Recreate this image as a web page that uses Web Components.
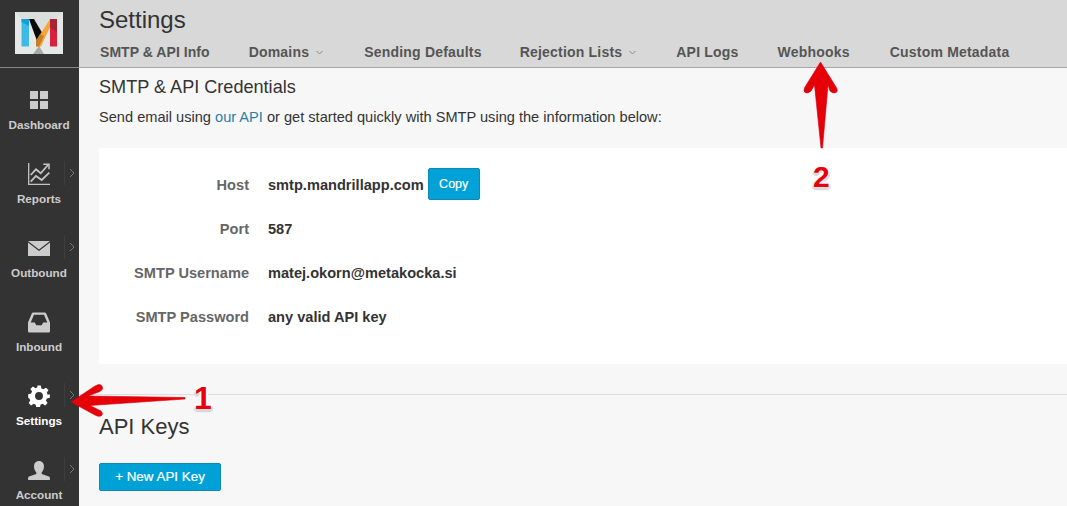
<!DOCTYPE html>
<html lang="en"><head><meta charset="utf-8"><title>Settings</title>
<style>
html,body{margin:0;height:100%;overflow:hidden}
body{font-family:"Liberation Sans",Arial,sans-serif;background:#f7f7f7;color:#333}
</style></head>
<body>
<app-shell>
  <side-bar slot="side">
    <nav-item label="Dashboard" icon="dashboard"></nav-item>
    <nav-item label="Reports" icon="reports" more></nav-item>
    <nav-item label="Outbound" icon="outbound" more></nav-item>
    <nav-item label="Inbound" icon="inbound"></nav-item>
    <nav-item label="Settings" icon="settings" more active></nav-item>
    <nav-item label="Account" icon="account" more></nav-item>
  </side-bar>
  <top-header slot="head" title="Settings">
    <tab-link style="letter-spacing:.05px">SMTP &amp; API Info</tab-link>
    <tab-link caret style="margin-right:2px">Domains</tab-link>
    <tab-link style="margin-right:-1px">Sending Defaults</tab-link>
    <tab-link caret style="margin-right:1px">Rejection Lists</tab-link>
    <tab-link>API Logs</tab-link>
    <tab-link style="margin-right:1px">Webhooks</tab-link>
    <tab-link>Custom Metadata</tab-link>
  </top-header>
  <credentials-panel></credentials-panel>
  <api-keys></api-keys>
  <arrow-notes slot="over"></arrow-notes>
</app-shell>
<script>
const def=(name,html)=>customElements.define(name,class extends HTMLElement{
  connectedCallback(){ if(this.shadowRoot) return; const r=this.attachShadow({mode:'open'}); r.innerHTML=typeof html==='function'?html(this):html; }
});
def('app-shell',`<style>
:host{display:block;position:relative;width:1067px;height:506px;overflow:hidden}
.wrap{display:flex;height:100%}
main{flex:1;min-width:0;display:flex;flex-direction:column}
</style><div class="wrap"><slot name="side"></slot><main><slot name="head"></slot><slot></slot></main></div><slot name="over"></slot>`);
const ICONS={
dashboard:`<svg width="20" height="20" viewBox="0 0 20 20" fill="#ccc"><rect x="1" y="1" width="8" height="8"/><rect x="11" y="1" width="8" height="8"/><rect x="1" y="11" width="8" height="8"/><rect x="11" y="11" width="8" height="8"/></svg>`,
reports:`<svg width="24" height="24" viewBox="0 0 24 24" fill="none" stroke="#c4c4c4"><path d="M1.700 1V22.300H23" stroke-width="1.300"/><path d="M3.700 13L9 7.300L13.700 11.300L21 3" stroke-width="1.800"/><path d="M16.300 2.300H22V7.300" stroke-width="1.500"/><path d="M3.700 19.700L9 14L14.700 18L22.300 10.700" stroke-width="1.800"/></svg>`,
outbound:`<svg width="22" height="15" viewBox="0 0 22 15"><path d="M0 0H22L11 8.500Z" fill="#ccc"/><path d="M0 1.500L11 10L22 1.500V15H0Z" fill="#ccc"/></svg>`,
inbound:`<svg width="22" height="21" viewBox="0 0 24 22" fill="#ccc"><path fill-rule="evenodd" d="M6 0H18Q19.500 0 20 1.500L24 11V20.500A1.500 1.500 0 0 1 22.500 22H1.500A1.500 1.500 0 0 1 0 20.500V11L4 1.500Q4.500 0 6 0ZM6.500 2.500L3 11H7.500L9 14H15L16.500 11H21L17.500 2.500Z"/></svg>`,
settings:`<svg width="22" height="22" viewBox="-.5 -.5 25 25"><path fill="#fff" fill-rule="evenodd" d="M10 0h4l.7 3.400 2.300 1 3-1.900 2.800 2.800-1.900 3 1 2.300L24.300 10v4l-3.400.7-1 2.300 1.900 3-2.800 2.800-3-1.900-2.300 1-.7 3.400h-4l-.7-3.400-2.300-1-3 1.900-2.800-2.800 1.900-3-1-2.300L-.3 14v-4l3.400-.7 1-2.300-1.900-3L5 1.200l3 1.900 2.300-1zM12 7.500a4.500 4.500 0 1 0 0 9 4.500 4.500 0 0 0 0-9z"/></svg>`,
account:`<svg width="22" height="19" viewBox="0 0 24 21" fill="#ccc"><path d="M12 0c3.500 0 5.500 2.500 5.500 6 0 2.600-1 5-2.500 6.500v2L23 17c.7.3 1 .8 1 1.500V21H0v-2.500c0-.7.3-1.200 1-1.500l8-2.500v-2C7.500 11 6.500 8.600 6.500 6 6.500 2.500 8.500 0 12 0z"/></svg>`};
def('side-bar',`<style>
:host{display:block;width:79px;flex:none;background:#333;height:506px;overflow:hidden}
.logo{height:67px;border-bottom:1px solid #888;display:flex;align-items:center;padding-left:15px;box-sizing:content-box}
.items{display:flex;flex-direction:column}
</style><div class="logo"><svg width="48" height="42" viewBox="0 0 48 42" style="margin-top:-1px">
<rect width="48" height="42" fill="#e6e8e7"/><path d="M0 0L24 24L48 0Z" fill="#dcdedd"/><path d="M24 34L18 42H29Z" fill="#a9a9a9"/>
<rect x="6.500" y="7" width="7.500" height="27.500" fill="#3fb9e6"/><path d="M6.500 7H14V14L6.500 10Z" fill="#12a0d8"/>
<rect x="35" y="7" width="7" height="27.500" fill="#d6213f"/><path d="M35 7H42V20L35 15Z" fill="#a92235"/>
<path d="M14 7H19L29 24L24 34.500Z" fill="#0a0a0a"/><path d="M35 7V15L26 34.500H21L21 29Z" fill="#f7a539"/><path d="M21 29L25 22L29 24L24 34.500H21Z" fill="#c77d27"/></svg></div>
<div class="items"><slot></slot></div>`);
def('nav-item',h=>`<style>
:host{display:block;height:74px;position:relative;box-sizing:border-box}
.ic{position:absolute;left:0;width:78px;top:20px;height:24px;display:flex;align-items:center;justify-content:center}
.lb{position:absolute;left:0;width:78px;text-align:center;top:49px;font:bold 11.700px/16px "Liberation Sans",Arial,sans-serif;color:${h.hasAttribute('active')?'#fff':'#ccc'}}
.sep{position:absolute;left:64px;top:19px;height:24px;border-left:1px solid #3e3e3e}
.ch{position:absolute;left:69px;top:26px}
</style><div class="ic">${ICONS[h.getAttribute('icon')]}</div>
${h.hasAttribute('more')?`<div class="sep"></div><svg class="ch" width="6" height="10" viewBox="0 0 6 10" fill="none" stroke="#777" stroke-width="1"><path d="M1 1L5 5L1 9"/></svg>`:''}
<div class="lb">${h.getAttribute('label')}</div>`);
def('top-header',h=>`<style>
:host{display:block;height:68px;box-sizing:border-box;background:#d8d8d8;border-bottom:1px solid #a8a8a8;padding:6px 0 0 20px}
h1{margin:0;font:400 24px/27px "Liberation Sans",Arial,sans-serif;color:#333}
.tabs{display:flex;gap:39px;margin-top:11px;padding-left:1px}
</style><h1>${h.getAttribute('title')}</h1><div class="tabs"><slot></slot></div>`);
def('tab-link',h=>`<style>
:host{display:inline-flex;align-items:center;font:bold 14px/16px "Liberation Sans",Arial,sans-serif;letter-spacing:.2px;color:#555;white-space:nowrap}
svg{margin-left:7px}
</style><slot></slot>${h.hasAttribute('caret')?`<svg width="7" height="5" viewBox="0 0 7 5" fill="none" stroke="#888"><path d="M.5 1L3.500 4L6.500 1"/></svg>`:''}`);
def('credentials-panel',`<style>
:host{display:block;padding:9px 0 0 20px}
h2{margin:0;font:400 18.100px/20px "Liberation Sans",Arial,sans-serif;color:#333}
p{margin:10px 0 0;font:400 14.600px/20px "Liberation Sans",Arial,sans-serif;color:#333}
a{color:#2a7fa8;text-decoration:none}
.card{margin-top:21px;background:#fff;height:216px;box-sizing:border-box;padding:14px 0 0;display:grid;grid-template-columns:150px 1fr;grid-auto-rows:44px;column-gap:19px;align-items:center}
.k{text-align:right;padding-top:2px;font:bold 14.600px/20px "Liberation Sans",Arial,sans-serif;color:#666}
.v{font:bold 14.600px/20px "Liberation Sans",Arial,sans-serif;color:#333;display:flex;align-items:center;gap:4px}
.v span{padding-top:2px}
</style>
<h2>SMTP &amp; API Credentials</h2>
<p>Send email using <a href="#">our API</a> or get started quickly with SMTP using the information below:</p>
<div class="card">
<div class="k">Host</div><div class="v"><span>smtp.mandrillapp.com</span> <ui-btn style="width:52px;height:32px;font-size:12.500px">Copy</ui-btn></div>
<div class="k">Port</div><div class="v"><span>587</span></div>
<div class="k">SMTP Username</div><div class="v"><span>matej.okorn@metakocka.si</span></div>
<div class="k">SMTP Password</div><div class="v"><span>any valid API key</span></div>
</div>`);
def('ui-btn',`<style>
:host{display:inline-flex;align-items:center;justify-content:center;box-sizing:border-box;background:#00a1d6;border:1px solid #0a8ab5;border-radius:2px;color:#fff;font:400 13.400px/14px "Liberation Sans",Arial,sans-serif;-webkit-text-stroke:.2px #fff;white-space:nowrap}
</style><slot></slot>`);
def('api-keys',`<style>
:host{display:block;margin-top:30px;border-top:1px solid #ddd;padding:18px 0 0 20px}
h2{margin:0;font:400 22px/27px "Liberation Sans",Arial,sans-serif;color:#333}
ui-btn{margin-top:23px;width:122px;height:28px}
</style><h2>API Keys</h2><ui-btn>+ New API Key</ui-btn>`);
def('arrow-notes',`<style>
:host{display:block;position:absolute;inset:0;pointer-events:none}
svg{position:absolute;left:0;top:0}
.n{position:absolute;font:bold 30px/30px "Liberation Sans",Arial,sans-serif;color:#e8000c;text-shadow:-2px -2px 1px #fff,2px -2px 1px #fff,-2px 2px 1px #ddd,2px 2px 1px #ddd,0 3px 1px #ccc}
</style>
<svg width="1067" height="506">
<path d="M71 402L95 386Q100 383 102 386Q104 389 100 391.500L88 396L185 397.500L185 399L90 405.500L101 411Q104 414 101 416Q98 417 95 415Z" fill="#e60008" stroke="#d4000a" stroke-width=".6" stroke-linejoin="round"/>
<path d="M820.500 62L836 87Q838.500 91 836 92.500Q833 94 830 91L828 85L822.500 148L821 148L814.500 85L811 91Q808 94 805 92.500Q803 91 805 87Z" fill="#e60008" stroke="#d4000a" stroke-width=".6" stroke-linejoin="round"/></svg>
<div class="n" style="left:194px;top:383px;font-size:32px">1</div><div class="n" style="left:813px;top:162px">2</div>`);
</script>
</body></html>
